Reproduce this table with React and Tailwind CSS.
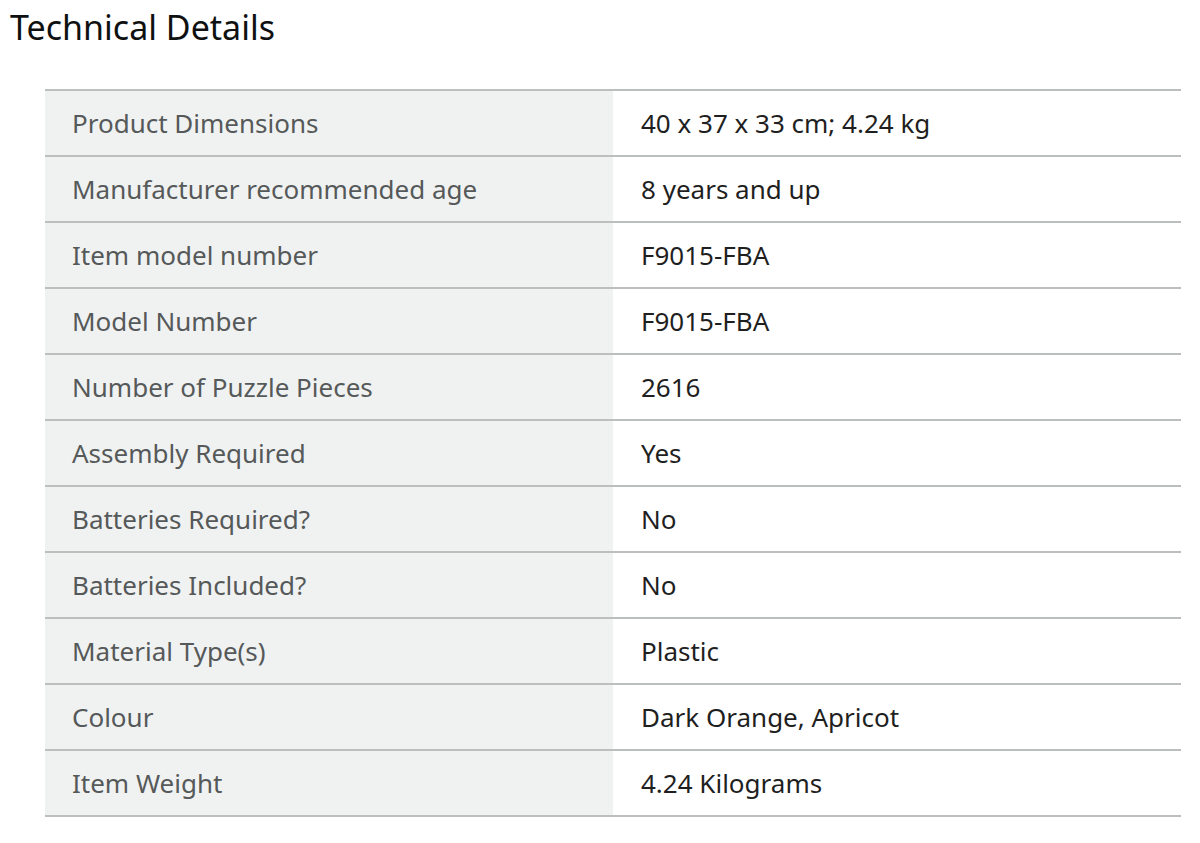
const rows = [
  ["Product Dimensions", "40 x 37 x 33 cm; 4.24 kg"],
  ["Manufacturer recommended age", "8 years and up"],
  ["Item model number", "F9015-FBA"],
  ["Model Number", "F9015-FBA"],
  ["Number of Puzzle Pieces", "2616"],
  ["Assembly Required", "Yes"],
  ["Batteries Required?", "No"],
  ["Batteries Included?", "No"],
  ["Material Type(s)", "Plastic"],
  ["Colour", "Dark Orange, Apricot"],
  ["Item Weight", "4.24 Kilograms"],
];

export default function App() {
  return (
    <div className="min-h-[843px] bg-white font-['Noto_Sans',sans-serif]">
      <h2 className="pl-[10px] pt-[7px] text-[34px] leading-[40px] text-[#0f1111]">
        Technical Details
      </h2>

      {/* spec table */}
      <div className="ml-[45px] mt-[42px] w-[1136px] border-t-2 border-[#bbbfbf]">
        {rows.map(([label, value]) => (
          <div key={label} className="flex h-[66px] border-b-2 border-[#bbbfbf]">
            <div className="flex w-[568px] items-center bg-[#f0f2f2] pl-[27px] text-[26px] text-[#565959]">
              {label}
            </div>
            <div className="flex flex-1 items-center pl-[28px] text-[26px] text-[#1f1f1f]">
              {value}
            </div>
          </div>
        ))}
      </div>
    </div>
  );
}
